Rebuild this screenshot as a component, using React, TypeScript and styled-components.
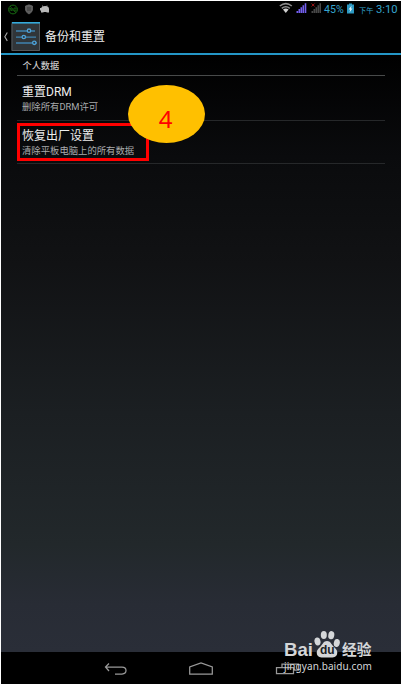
import React from 'react';
import styled, { createGlobalStyle } from 'styled-components';

const GlobalStyle = createGlobalStyle`
  * { box-sizing: border-box; }
  body { margin: 0; background: #fff; font-family: Roboto, "Noto Sans CJK SC", sans-serif; }
  svg { display: block; flex: none; }
`;

const Screen = styled.div`
  position: relative;
  display: flex;
  flex-direction: column;
  width: 401px;
  height: 684px;
  padding: 1px 0 0 1px;
  overflow: hidden;
`;

const StatusBar = styled.header`
  display: flex;
  justify-content: space-between;
  align-items: center;
  height: 17px;
  padding: 0 4px 0 6px;
  background: #000;
`;

const Clock = styled.div`
  display: flex;
  align-items: center;
  color: #35a5cf;
  font-size: 11px;
  line-height: 17px;
  white-space: nowrap;
`;

const Battery = styled.span`
  width: 20px;
  margin: 0 3px;
  font-size: 10.6px;
`;

const Meridiem = styled.span`
  width: 17px;
  margin: 1px 0 0 5px;
  font-size: 7.2px;
`;

const Hour = styled.span`
  width: 21px;
  font-size: 11.2px;
`;

const ActionBar = styled.div`
  display: flex;
  align-items: center;
  height: 37px;
  padding-left: 2px;
  background: #000;
  border-bottom: 2px solid #2496c6;
`;

const Title = styled.h1`
  margin: 2px 0 0 5px;
  color: #eee;
  font-size: 12px;
  font-weight: 400;
  line-height: 18px;
`;

const Content = styled.main`
  flex: 1;
  padding: 0 16px;
  background: linear-gradient(#000 0%, #0a0b0d 17%, #111214 35%, #1b1f22 60%, #22282b 82%, #282c35 92%, #2a2e38 100%);
`;

const SectionTitle = styled.h2`
  height: 21px;
  margin: 0;
  padding-left: 5.5px;
  border-bottom: 1px solid #484a4a;
  color: #c9c9c9;
  font-size: 9.2px;
  font-weight: 500;
  line-height: 21px;
`;

const Row = styled.div<{ $height: number; $top: number }>`
  height: ${(p) => p.$height}px;
  padding: ${(p) => p.$top}px 0 0 5px;
  border-bottom: 1px solid #26282a;
`;

const RowTitle = styled.div`
  color: #eee;
  font-size: 12px;
  line-height: 16px;
`;

const RowSummary = styled.div`
  color: #a9abad;
  font-size: 9.35px;
  line-height: 14px;
`;

const NavBar = styled.nav`
  display: flex;
  height: 32px;
  background: #000;
`;

const Highlight = styled.div`
  position: absolute;
  left: 17px;
  top: 123px;
  width: 132px;
  height: 38px;
  border: 3px solid #f00;
`;

const StepBadge = styled.div`
  position: absolute;
  left: 128px;
  top: 85px;
  width: 77px;
  height: 58px;
  padding: 6px 2px 0 0;
  border-radius: 50%;
  background: #ffc000;
  color: #f00;
  font: 24px/56px "Noto Sans", sans-serif;
  text-align: center;
`;

const Watermark = styled.div`
  position: absolute;
  left: 284px;
  top: 630px;
  width: 90px;
  color: #d4d6d8;
`;

const Brand = styled.div`
  display: flex;
  align-items: flex-end;
  height: 29px;
`;

const BrandLatin = styled.span`
  width: 30px;
  font: 700 18.6px/18px "Liberation Sans", sans-serif;
`;

const BrandHan = styled.span`
  margin: 0 0 2px 2px;
  font: 700 14.7px/16px "Noto Sans CJK SC", sans-serif;
  white-space: nowrap;
`;

const Paw = styled.div`
  position: relative;
  width: 26px;
  height: 29px;
`;

const PawText = styled.span`
  position: absolute;
  left: 6px;
  top: 12px;
  color: #1b1e23;
  font: 700 12px/16px "Liberation Sans", sans-serif;
`;

const Domain = styled.div`
  font: 10px/15px "Noto Sans", sans-serif;
  letter-spacing: 0.08px;
  white-space: nowrap;
`;

const Notifications = () => (
  <svg width="50" height="17" viewBox="7 1 50 17">
    <g fill="none" stroke="#176a12">
      <circle cx="13" cy="9.5" r="4.4" />
      <path d="M10 11V8l2 3V8m2 0v3h2V8zM10 6l6 7" strokeWidth=".8" />
    </g>
    <path d="M25.5 6l3.5-1.2 3.5 1.2v4q-.6 2.800-3.500 4-2.900-1.200-3.500-4z" fill="#5f5f5f" stroke="#777" strokeWidth=".6" />
    <path d="M27 8h4M27 10h4" stroke="#303030" strokeWidth=".8" />
    <path d="M41 8q1-2 4-2 4 0 4 3v3.500h-2l-1-.5h-2l-1 .5h-2v-2h-1V8z" fill="#b8b8b8" />
    <path d="M42.500 5.500l.5 1.500m4-1.500l-.5 1.500" stroke="#aaa" strokeWidth=".8" />
  </svg>
);

const Signals = () => (
  <svg width="43" height="17" viewBox="277.2 1 43 17">
    <g fill="none" stroke="#8d8d8d" strokeWidth="1.6">
      <path d="M279 6q6-4.800 12 0M281 8.300q4-3.200 8 0" />
    </g>
    <path d="M282.2 9.500q2.800-2 5.600 0L285 13z" fill="#d0d0d0" />
    <path d="M296.5 13v-2M298.5 13V9M300.5 13V7.2M302.5 13V5.200M304.7 13V3.2" stroke="#735fee" strokeWidth="1.6" />
    <path d="M311.5 13v-2M313.5 13V9M315.5 13V7.2M317.5 13V5.200M319.5 13V3.2" stroke="#484848" strokeWidth="1.6" />
    <path d="M310.8 3.500l3 3m0-3l-3 3" stroke="#a01616" />
  </svg>
);

const BatteryIcon = () => (
  <svg width="7" height="17" viewBox="347 1.5 7 17">
    <path d="M349 4h3v1h2v9h-7V5h2z" fill="#2d9ac4" />
    <path d="M351.6 6l-3 4h1.6l-.7 3 3-4H351z" fill="#e5f4fa" />
  </svg>
);

const BackCaret = () => (
  <svg width="8" height="36" viewBox="3 18 8 36">
    <path d="M7.3 32.5L4.8 36.7l2.5 4.2" fill="none" stroke="#aaa" strokeWidth="1.1" />
  </svg>
);

const SettingsIcon = () => (
  <svg width="29" height="36" viewBox="11 18 29 36">
    <path d="M11.5 22h28.5v29h-28.500z" fill="#303539" />
    <path d="M12 23.5v27h27.5v-27" fill="none" stroke="#53585c" />
    <path d="M12 22.8h28" stroke="#35a9da" strokeWidth="1.6" />
    <g fill="#303539" stroke="#3f83b0" strokeWidth="1.3">
      <path d="M16 31h19M16 37.2h20M16 43h21" />
      <g stroke="#4ea2d8" strokeWidth="1.3">
        <circle cx="29" cy="30.7" r="1.7" />
        <circle cx="23.8" cy="37" r="1.7" />
        <circle cx="34.3" cy="42.8" r="1.7" />
      </g>
    </g>
  </svg>
);

const NavIcons = () => (
  <svg width="400" height="32" viewBox="1 652 400 32">
    <g fill="none" stroke="#999" strokeWidth="1.25">
      <path d="M109 663.5l-3.5 3.5 3.5 4M106 667.2h16q4 0 4 3.4 0 3.4-4 3.4h-7" />
      <path d="M189.7 674.2v-7.2l11.3-4 11.3 4v7.2z" />
      <path d="M276.5 667.5h17v6h-17zM282 667v-3h16.5v6h-5" />
    </g>
  </svg>
);

const PawIcon = () => (
  <svg width="26" height="29" viewBox="314 630 26 29">
    <g fill="#d4d6d8">
      <ellipse cx="317.5" cy="641.5" rx="3" ry="4" transform="rotate(-12 317.5 641.5)" />
      <ellipse cx="323.8" cy="635" rx="3" ry="4.1" />
      <ellipse cx="331.3" cy="635.2" rx="3" ry="4.1" transform="rotate(10 331.3 635.2)" />
      <ellipse cx="336.8" cy="643" rx="3" ry="4" transform="rotate(12 336.8 643)" />
      <path d="M327 641c3.5 0 4 3 6.5 5.5 3 2.5 4.5 5 3.5 8-1 3-4.5 3.3-10 3-5.500.3-9 0-10-3-1-3 .5-5.500 3.500-8 2.500-2.500 3-5.500 6.500-5.500z" />
    </g>
  </svg>
);

const rows = [
  { title: '重置DRM', summary: '删除所有DRM许可', height: 45, top: 8 },
  { title: '恢复出厂设置', summary: '清除平板电脑上的所有数据', height: 43, top: 7 },
];

export default function App() {
  return (
    <Screen>
      <GlobalStyle />
      <StatusBar>
        <Notifications />
        <Clock>
          <Signals />
          <Battery>45%</Battery>
          <BatteryIcon />
          <Meridiem>下午</Meridiem>
          <Hour>3:10</Hour>
        </Clock>
      </StatusBar>
      <ActionBar>
        <BackCaret />
        <SettingsIcon />
        <Title>备份和重置</Title>
      </ActionBar>
      <Content>
        <SectionTitle>个人数据</SectionTitle>
        {rows.map((r) => (
          <Row key={r.title} $height={r.height} $top={r.top}>
            <RowTitle>{r.title}</RowTitle>
            <RowSummary>{r.summary}</RowSummary>
          </Row>
        ))}
      </Content>
      <NavBar>
        <NavIcons />
      </NavBar>
      <Highlight />
      <StepBadge>4</StepBadge>
      <Watermark>
        <Brand>
          <BrandLatin>Bai</BrandLatin>
          <Paw>
            <PawIcon />
            <PawText>du</PawText>
          </Paw>
          <BrandHan>经验</BrandHan>
        </Brand>
        <Domain>jingyan.baidu.com</Domain>
      </Watermark>
    </Screen>
  );
}
